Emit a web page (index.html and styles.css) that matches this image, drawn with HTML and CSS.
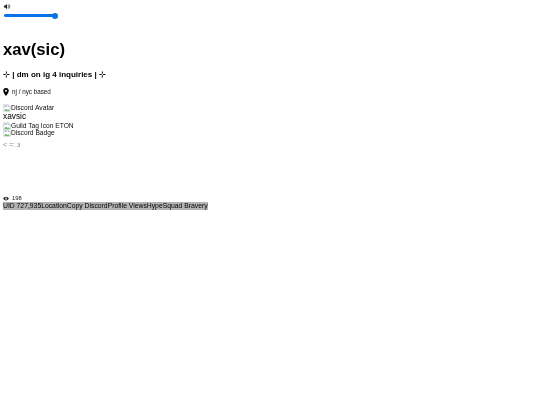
FILE: index.html
```html
<!DOCTYPE html>
<html lang="en">
<head>
<meta charset="utf-8">
<title>xav(sic)</title>
<link rel="stylesheet" href="styles.css">
</head>
<body>
<main class="page">
<div class="volume">
  <svg class="vol-icon" viewBox="0 0 16 16"><path d="M1 5.500h3L8 2v12l-4-3.500H1z" fill="#222"/><path d="M10 5a4 4 0 0 1 0 6M12 3a7 7 0 0 1 0 10" fill="none" stroke="#222" stroke-width="1.600"/></svg>
  <div class="slider"><span class="thumb"></span></div>
</div>
<h1 class="name">xav(sic)</h1>
<h2 class="tagline">⊹ | dm on ig 4 inquiries | ⊹</h2>
<p class="location">
  <svg class="pin" viewBox="0 0 12 16"><path d="M6 0a5.500 5.500 0 0 0-5.500 5.500C.5 9.500 6 16 6 16s5.500-6.500 5.500-10.500A5.500 5.500 0 0 0 6 0zm0 7.500a2 2 0 1 1 0-4 2 2 0 0 1 0 4z" fill="#000"/></svg>
  <span>nj / nyc based</span>
</p>
<div class="discord">
  <div class="line"><svg class="broken" viewBox="0 0 16 16"><use href="#broken-icon"/></svg>Discord Avatar</div>
  <div class="line user">xavsic</div>
  <div class="line"><svg class="broken" viewBox="0 0 16 16"><use href="#broken-icon"/></svg>Guild Tag Icon ETON</div>
  <div class="line badge"><svg class="broken" viewBox="0 0 16 16"><use href="#broken-icon"/></svg>Discord Badge</div>
</div>
<p class="status">&lt; =: з</p>
<div class="views">
  <svg class="eye" viewBox="0 0 16 12"><path d="M8 1C4.500 1 1.500 3.500.5 6c1 2.500 4 5 7.500 5s6.500-2.500 7.500-5C14.500 3.500 11.500 1 8 1zm0 8a3 3 0 1 1 0-6 3 3 0 0 1 0 6z" fill="#222"/><circle cx="8" cy="6" r="1.500" fill="#222"/></svg>
  <span>198</span>
</div>
<div class="tips"><span class="tipbar">UID 727,935LocationCopy DiscordProfile ViewsHypeSquad Bravery</span></div>
</main>
<svg class="defs" aria-hidden="true"><defs><g id="broken-icon"><path d="M1.500 1.500h9l4 4v9h-13z" fill="#fff" stroke="#a8a8a8"/><path d="M10.500 1.500v4h4" fill="#e4e4e4" stroke="#a8a8a8"/><path d="M2.500 13.500l3.500-4 2.500 2.500 2-1.500 3 3z" fill="#4fa64f"/><path d="M2.500 3h6v3h-6z" fill="#a9c4ee"/></g></defs></svg>
</body>
</html>
```
FILE: styles.css
```css
html, body { margin: 0; padding: 0; background: #fff; }
body {
  width: 540px;
  height: 405px;
  overflow: hidden;
  font-family: "Liberation Sans", Arial, sans-serif;
  font-size: 6.670px;
  line-height: 8px;
  color: #000;
}
.page {
  height: 100%;
  box-sizing: border-box;
  padding: 3px 0 0 3px;
  background: #fff;
  filter: blur(0.3px);
}
.volume { display: flex; flex-direction: column; align-items: flex-start; }
.vol-icon { width: 8px; height: 7px; display: block; }
.slider {
  position: relative;
  width: 52px;
  height: 3px;
  margin: 4px 0 1px 1px;
  background: #0a72e8;
  border-radius: 2px;
}
.thumb {
  position: absolute;
  right: -2px;
  top: -1.500px;
  width: 6px;
  height: 6px;
  background: #0a72e8;
  border-radius: 50%;
}
.name {
  margin: 22px 0 0;
  font-size: 16.670px;
  line-height: 20px;
  font-weight: 700;
}
.tagline {
  margin: 10px 0 0;
  font-size: 8px;
  line-height: 10px;
  font-weight: 700;
}
.location {
  margin: 8px 0 0;
  display: flex;
  align-items: center;
  gap: 3px;
  font-size: 6.300px;
  color: #111;
}
.pin { width: 6px; height: 8px; }
.discord { margin-top: 7px; color: #111; }
.line { display: flex; align-items: center; height: 9px; line-height: 9px; white-space: nowrap; }
.user { font-size: 8.330px; color: #000; }
.badge { margin-top: -2px; }
.broken { width: 8px; height: 8px; flex: none; }
.status { margin: 4px 0 0; font-size: 7px; color: #888; }
.views {
  margin-top: 45px;
  display: flex;
  align-items: center;
  gap: 3px;
  font-size: 5.800px;
  color: #222;
}
.eye { width: 6px; height: 5px; }
.tips { margin-top: 0; font-size: 6.800px; line-height: 8px; color: #000; }
.tipbar { background: #b4b4b4; display: inline-block; white-space: nowrap; }
.defs { display: none; }
```
